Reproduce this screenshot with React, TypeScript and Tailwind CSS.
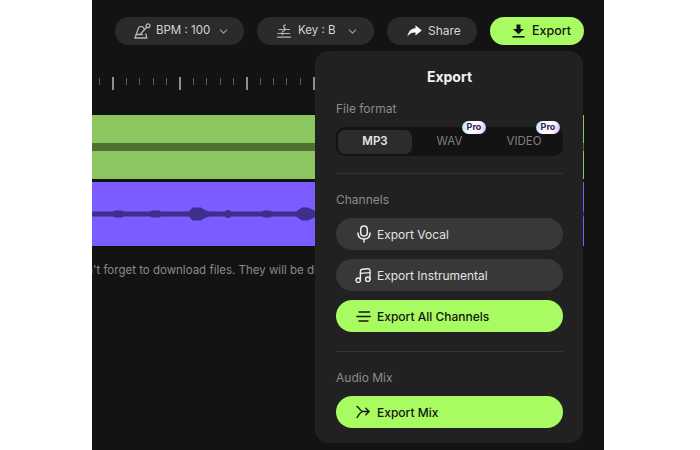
import { ChevronDown } from 'lucide-react';

const ticks = Array.from({ length: 36 }, (_, i) => i);

function MetronomeIcon() {
  return (
    <svg width="17" height="16" viewBox="0 0 17 16" fill="none" stroke="#b5b5b5" strokeWidth="1.3" strokeLinejoin="round" strokeLinecap="round">
      <path d="M1 15 L4.5 5 C4.8 4 5.4 3.6 6.2 3.6 H8 C8.8 3.6 9.3 4 9.6 4.8 L10 6" />
      <path d="M1 15 H12.8 L11.8 11" />
      <path d="M2.2 11.5 H8.5" />
      <path d="M6.5 11 L12.5 4.5" />
      <circle cx="14" cy="2.8" r="1.9" />
    </svg>
  );
}

function KeyIcon() {
  return (
    <svg width="14" height="14" viewBox="0 0 14 14" fill="none" stroke="#b5b5b5" strokeWidth="1.2" strokeLinecap="round">
      <path d="M0.5 13.2 H13.5" />
      <path d="M2 5.5 H12.5" />
      <path d="M0.8 9.5 H12.5" />
      <path d="M8.5 1 C6.5 1 6 2.5 7.2 3.5 C8.6 4.7 8.2 6.5 6.5 7 C4.8 7.5 4.2 9.5 5.8 10.5" />
    </svg>
  );
}

function ShareIcon() {
  return (
    <svg width="15" height="12" viewBox="0 0 15 12">
      <defs>
        <linearGradient id="shareFill" x1="0" x2="1" y1="0" y2="0">
          <stop offset="0" stopColor="#cfe0ff" />
          <stop offset="0.5" stopColor="#ffffff" />
          <stop offset="1" stopColor="#fff4e0" />
        </linearGradient>
      </defs>
      <path d="M8.5 0.3 L14.8 5.4 L8.5 10.6 V7.6 C5 7.4 2.6 8.6 0.4 11.6 C1 7 3.6 3.6 8.5 3.2 Z" fill="url(#shareFill)" />
    </svg>
  );
}

function DownloadIcon() {
  return (
    <svg width="13" height="14" viewBox="0 0 13 14" fill="#141414">
      <path d="M4.5 0.5 H8.5 V5 H12 L6.5 10.3 L1 5 H4.5 Z" />
      <rect x="0.5" y="12" width="12" height="1.6" />
    </svg>
  );
}

function MicIcon() {
  return (
    <svg width="14" height="18" viewBox="0 0 14 18" fill="none" stroke="#ececec" strokeWidth="1.5" strokeLinecap="round">
      <rect x="3.7" y="1" width="6.6" height="10" rx="3.3" />
      <path d="M1 8 C1 12 3.5 14 7 14 C10.5 14 13 12 13 8" />
      <path d="M7 14 V17" />
    </svg>
  );
}

function NotesIcon() {
  return (
    <svg width="17" height="15" viewBox="0 0 17 15" fill="none" stroke="#ececec" strokeWidth="1.4" strokeLinecap="round">
      <circle cx="3.2" cy="12.2" r="2.2" />
      <circle cx="12.8" cy="11.2" r="2.2" />
      <path d="M5.4 12 V3.4 C5.4 2 6 1.4 7.2 1.3 L13 0.8 C14.4 0.7 15 1.3 15 2.6 V11" />
      <path d="M5.4 5.4 L15 4.6" />
    </svg>
  );
}

function LinesIcon() {
  return (
    <svg width="15" height="11" viewBox="0 0 15 11" fill="none" stroke="#141414" strokeWidth="1.4" strokeLinecap="round">
      <path d="M3 1 H13.5" />
      <path d="M0.8 5.5 H14.2" />
      <path d="M3 10 H12" />
    </svg>
  );
}

function MixIcon() {
  return (
    <svg width="14" height="14" viewBox="0 0 14 14" fill="none" stroke="#141414" strokeWidth="1.3" strokeLinecap="round" strokeLinejoin="round">
      <path d="M1 1.5 C3 2 4 6.5 7 6.5 H13" />
      <path d="M1 12.5 C2.5 11 3.5 7.5 6 6.8" />
      <path d="M9.8 3.3 L13 6.5 L9.8 9.7" />
    </svg>
  );
}

function ProBadge() {
  return (
    <span className="absolute -top-[9px] right-[1px] flex h-[13px] w-[24px] items-center justify-center rounded-full bg-[linear-gradient(100deg,#8fe3ff,#f4f4ff_25%,#ffffff_55%,#ffe2ee_80%,#a9b6ff)] text-[9px] font-bold text-[#2b2350]">
      Pro
    </span>
  );
}

function Waveform() {
  return (
    <svg className="h-full w-full" viewBox="0 0 492 64" preserveAspectRatio="none" fill="#3f2f8c">
      <path d="M0 29.5 H21 L23 28.5 H30 L32 29.5 H58 L60 28.5 H67 L69 29.5 H97 L99 27 L101 25.5 H109 L111 27 L114 28.5 L118 29.5 H133 L135 28 H137 L139 29.5 H170 L172 28.5 H178 L180 29.5 H204 L207 27.5 L210 25.5 H216 L219 27 L222 28.5 L226 29.5 H492 V34.5 H226 L222 35.5 L219 37 L216 38.5 H210 L207 36.5 L204 34.5 H180 L178 35.5 H172 L170 34.5 H139 L137 36 H135 L133 34.5 H118 L114 35.5 L111 37 L109 38.5 H101 L99 37 L97 34.5 H69 L67 35.5 H60 L58 34.5 H32 L30 35.5 H23 L21 34.5 H0 Z" />
    </svg>
  );
}

export default function App() {
  return (
    <div className="h-[450px] w-[700px] overflow-hidden bg-white font-['Inter','Liberation_Sans',sans-serif]">
      <div className="relative ml-[92px] flex h-full w-[512px] flex-col bg-[#131313]">
        <div className="flex justify-end gap-[13px] pt-[17px] pr-[20px]">
          <div className="flex h-[28px] w-[129px] items-center rounded-full bg-[#2b2b2b] pl-[19px] text-[11.5px] text-[#d6d6d6]">
            <MetronomeIcon />
            <span className="ml-[5px]">BPM : 100</span>
            <ChevronDown className="ml-[7px] h-[13px] w-[13px] text-[#a0a0a0]" />
          </div>
          <div className="flex h-[28px] w-[117px] items-center rounded-full bg-[#2b2b2b] pl-[20px] text-[11.5px] text-[#d6d6d6]">
            <KeyIcon />
            <span className="ml-[7px]">Key : B</span>
            <ChevronDown className="ml-[10px] h-[13px] w-[13px] text-[#a0a0a0]" />
          </div>
          <div className="flex h-[28px] w-[90px] items-center rounded-full bg-[#2b2b2b] pl-[20px] text-[12px] text-[#d6d6d6]">
            <ShareIcon />
            <span className="ml-[6px]">Share</span>
          </div>
          <div className="flex h-[28px] w-[94px] items-center rounded-full bg-[#a9fb62] pl-[22px] text-[12.5px] font-medium text-[#141414]">
            <DownloadIcon />
            <span className="ml-[7px]">Export</span>
          </div>
        </div>

        <div className="mt-[32px] flex h-[13px] items-start pl-[7px]">
          {ticks.map((i) => (
            <div key={i} className="flex w-[13.4px] shrink-0 justify-start">
              <div className={i % 5 === 1 ? 'h-[13px] w-[2px] bg-[#8f8f8f]' : 'mt-[1px] h-[7px] w-px bg-[#5c5c5c]'} />
            </div>
          ))}
        </div>

        <div className="mt-[25px] mr-[20px] flex flex-col gap-[3px]">
          <div className="flex h-[64px] flex-col justify-center bg-[#8bc660]">
            <div className="h-[8px] bg-[#50702f]" />
          </div>
          <div className="h-[64px] bg-[#7b5cff]">
            <Waveform />
          </div>
        </div>

        <div className="mt-[16px] mr-[197px] overflow-hidden text-[11.5px] whitespace-nowrap text-[#8a8a8a]">
          <span className="-ml-[21px] inline-block">Don't forget to download files. They will be discarded</span>
        </div>

        <div className="absolute top-[51px] left-[223px] flex h-[392px] w-[268px] flex-col rounded-[14px] bg-[#212121] pt-[17px] pr-[20px] pl-[21px] text-[12px]">
          <div className="text-center text-[14px] leading-[17px] font-bold text-[#f2f2f2]">Export</div>

          <div className="mt-[16px] leading-[16px] text-[#8c8c8c]">File format</div>
          <div className="mt-[10px] flex h-[29px] items-center rounded-[9px] bg-[#131313] px-[2px] text-[11.5px] text-[#7f7f7f]">
            <div className="flex h-[24px] w-[74px] items-center justify-center rounded-[7px] bg-[#2c2c2c] pt-px font-semibold text-[#e6e6e6]">MP3</div>
            <div className="relative flex h-[24px] w-[75px] items-center justify-center pt-px">
              WAV
              <ProBadge />
            </div>
            <div className="relative flex h-[24px] w-[74px] items-center justify-center pt-px">
              VIDEO
              <ProBadge />
            </div>
          </div>
          <div className="mt-[17px] h-px bg-[#343434]" />

          <div className="mt-[18px] leading-[16px] text-[#8c8c8c]">Channels</div>
          <div className="mt-[10px] flex flex-col gap-[9px]">
            <div className="flex h-[32px] items-center rounded-full bg-[#383838] pl-[21px] text-[#e4e4e4]">
              <MicIcon />
              <span className="ml-[6px] pt-px leading-none">Export Vocal</span>
            </div>
            <div className="flex h-[32px] items-center rounded-full bg-[#383838] pl-[19px] text-[#e4e4e4]">
              <NotesIcon />
              <span className="ml-[5px] pt-px leading-none">Export Instrumental</span>
            </div>
            <div className="flex h-[32px] items-center rounded-full bg-[#a9fb62] pl-[20px] font-medium text-[#141414]">
              <LinesIcon />
              <span className="ml-[6px] pt-px leading-none">Export All Channels</span>
            </div>
          </div>
          <div className="mt-[19px] h-px bg-[#343434]" />

          <div className="mt-[18px] leading-[16px] text-[#8c8c8c]">Audio Mix</div>
          <div className="mt-[10px] flex h-[32px] items-center rounded-full bg-[#a9fb62] pl-[20px] font-medium text-[#141414]">
            <MixIcon />
            <span className="ml-[7px] pt-px leading-none">Export Mix</span>
          </div>
        </div>
      </div>
    </div>
  );
}
